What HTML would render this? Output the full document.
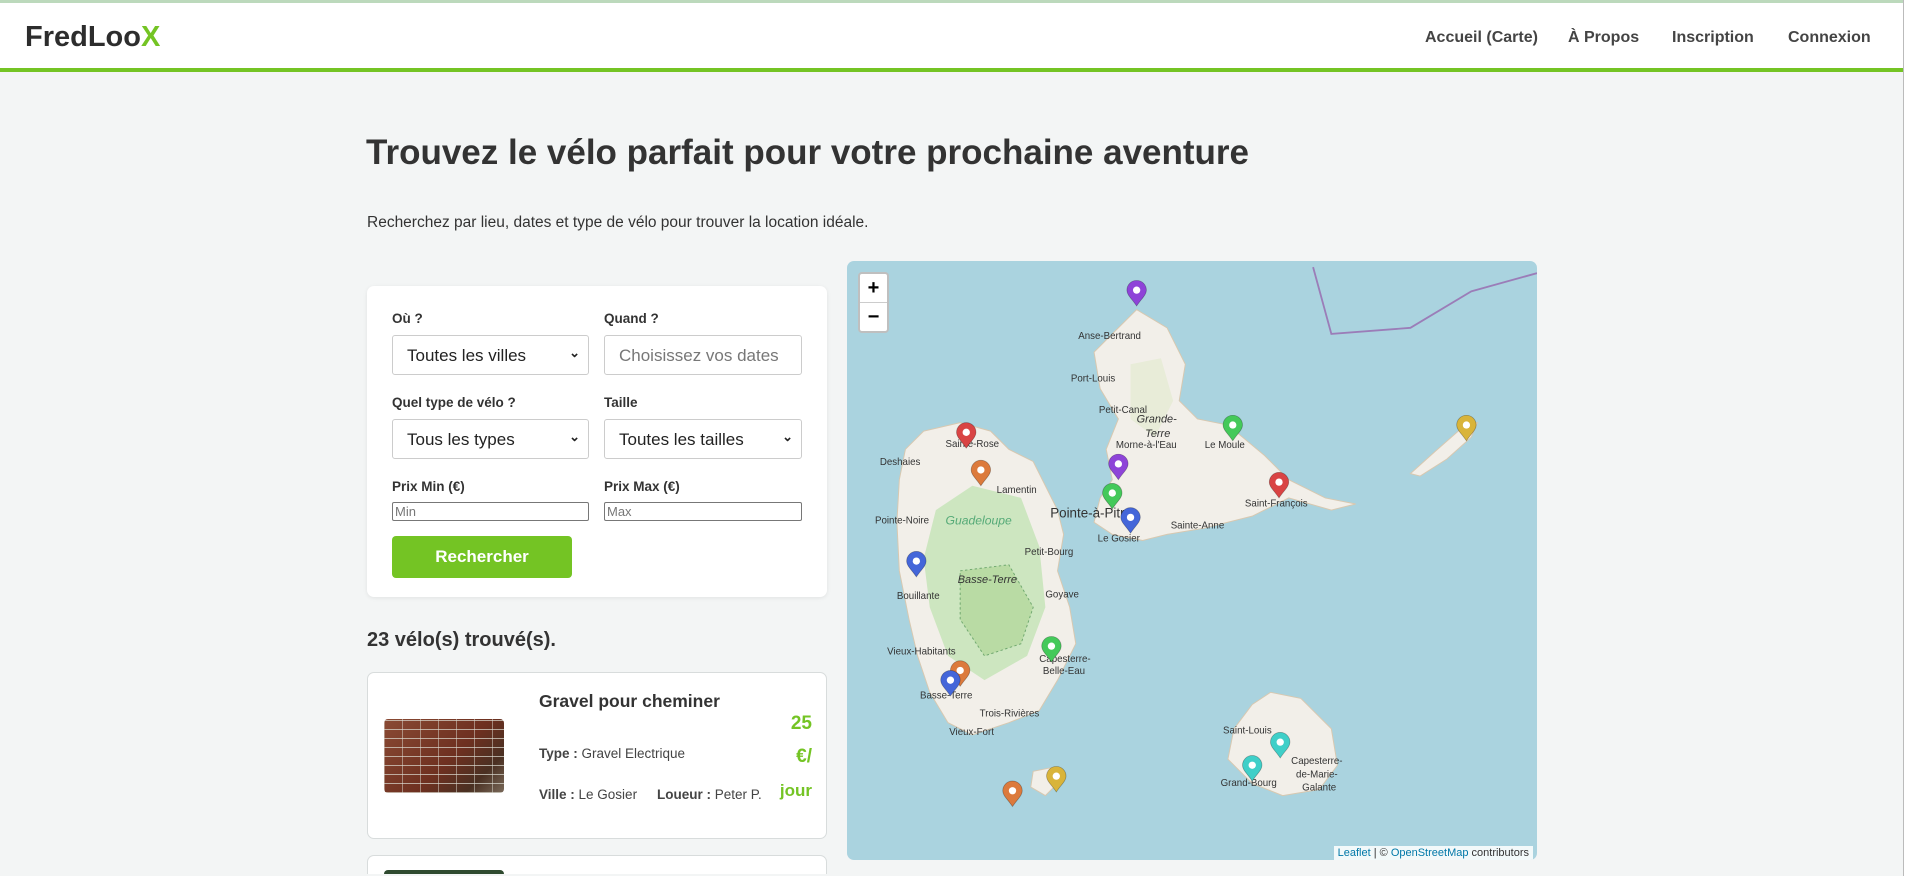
<!DOCTYPE html>
<html><head><meta charset="utf-8"><style>
*{box-sizing:border-box;margin:0;padding:0}
html{width:1907px;height:876px;overflow:hidden}
body{width:1907px;height:876px;overflow:hidden;background:#f3f5f5;font-family:"Liberation Sans",sans-serif;color:#333;position:relative;contain:paint}
.topline{position:absolute;left:0;top:0;width:1907px;height:3px;background:#bcd9bc}
header{position:absolute;left:0;top:3px;width:1903px;height:69px;background:#fff;border-bottom:4px solid #74c424}
.logo{position:absolute;left:25px;top:18px;font-size:29px;font-weight:bold;color:#2d2d2d}
.logo span{color:#74c424}
nav a{position:absolute;top:26px;font-size:16px;font-weight:bold;color:#444;text-decoration:none}
.sb{position:absolute;left:1903px;top:0;width:4px;height:876px;background:#fff;border-left:1px solid #bbb}
h1{position:absolute;left:366px;top:133px;font-size:35px;font-weight:bold;color:#333;white-space:nowrap}
.sub{position:absolute;left:367px;top:214px;font-size:15.5px;color:#333}
.form{position:absolute;left:367px;top:286px;width:460px;height:311px;background:#fff;border-radius:7px;box-shadow:0 1px 4px rgba(0,0,0,.08)}
.lbl{position:absolute;font-size:13.5px;font-weight:bold;color:#333}
.sel{position:absolute;height:40px;border:1px solid #ccc;border-radius:3px;background:#fff;font-size:17px;color:#222;padding:10px 14px}
.sel .ch{position:absolute;right:8px;top:9px;font-size:13px;font-weight:bold}
.inp{position:absolute;height:19px;border:1px solid #777;border-radius:2px;background:#fff;font-size:13px;color:#777;padding:1px 2px}
.btn{position:absolute;left:25px;top:250px;width:180px;height:42px;background:#74c424;border-radius:4px;color:#fff;font-weight:bold;font-size:17px;text-align:center;line-height:42px}
.count{position:absolute;left:367px;top:629px;font-size:20px;font-weight:bold;color:#333}
.card{position:absolute;left:367px;width:460px;background:#fff;border:1px solid #d8dcdc;border-radius:7px;overflow:hidden}
.img{position:absolute;left:16px;top:46px;width:120px;height:74px;border-radius:4px;background:
repeating-linear-gradient(0deg,rgba(220,220,210,.7) 0 1px,transparent 1px 9px),
repeating-linear-gradient(90deg,rgba(220,220,210,.5) 0 1px,transparent 1px 18px),
linear-gradient(135deg,#8a4a34,#6e3020 55%,#4a3022 80%,#7a6a5a)}
.title{position:absolute;left:171px;top:18px;font-size:17.5px;font-weight:bold;color:#333}
.meta{position:absolute;font-size:13.5px;color:#444}
.pr{position:absolute;right:14px;font-size:19px;font-weight:bold;color:#74c424}
.map{position:absolute;left:847px;top:261px;width:690px;height:599px;border-radius:7px;overflow:hidden;background:#aad3df}
.zc{position:absolute;left:11px;top:11px;width:31px;height:61px;background:#fff;border:2px solid rgba(0,0,0,.25);border-radius:4px}
.zc div{height:29px;text-align:center;font-size:20px;font-weight:bold;line-height:28px;color:#000}
.attr{position:absolute;right:4px;bottom:0;background:rgba(255,255,255,.85);font-size:11px;padding:1px 4px;color:#333}
.attr span{color:#0078a8}
</style></head><body>
<div class="topline"></div>
<header><div class="logo">FredLoo<span>X</span></div>
<nav><a style="left:1425px">Accueil (Carte)</a><a style="left:1568px">À Propos</a><a style="left:1672px">Inscription</a><a style="left:1788px">Connexion</a></nav></header>
<div class="sb"></div>
<h1>Trouvez le vélo parfait pour votre prochaine aventure</h1>
<div class="sub">Recherchez par lieu, dates et type de vélo pour trouver la location idéale.</div>
<div class="form">
<div class="lbl" style="left:25px;top:25px">Où ?</div>
<div class="lbl" style="left:237px;top:25px">Quand ?</div>
<div class="sel" style="left:25px;top:49px;width:197px">Toutes les villes<span class="ch">⌄</span></div>
<div class="sel" style="left:237px;top:49px;width:198px;color:#777">Choisissez vos dates</div>
<div class="lbl" style="left:25px;top:109px">Quel type de vélo ?</div>
<div class="lbl" style="left:237px;top:109px">Taille</div>
<div class="sel" style="left:25px;top:133px;width:197px">Tous les types<span class="ch">⌄</span></div>
<div class="sel" style="left:237px;top:133px;width:198px">Toutes les tailles<span class="ch">⌄</span></div>
<div class="lbl" style="left:25px;top:193px">Prix Min (€)</div>
<div class="lbl" style="left:237px;top:193px">Prix Max (€)</div>
<div class="inp" style="left:25px;top:216px;width:197px">Min</div>
<div class="inp" style="left:237px;top:216px;width:198px">Max</div>
<div class="btn">Rechercher</div>
</div>
<div class="count">23 vélo(s) trouvé(s).</div>
<div class="card" style="top:672px;height:167px">
<div class="img"></div>
<div class="title">Gravel pour cheminer</div>
<div class="meta" style="left:171px;top:73px"><b>Type :</b> Gravel Electrique</div>
<div class="meta" style="left:171px;top:114px"><b>Ville :</b> Le Gosier</div>
<div class="meta" style="left:289px;top:114px"><b>Loueur :</b> Peter P.</div>
<div class="pr" style="top:40px">25</div>
<div class="pr" style="top:73px">€/</div>
<div class="pr" style="top:108px;font-size:17px">jour</div>
</div>
<div class="card" style="top:855px;height:19px;border-bottom:none;border-radius:7px 7px 0 0"><div style="position:absolute;left:16px;top:14px;width:120px;height:5px;background:#2f4a2f;border-radius:4px 4px 0 0"></div></div>
<div class="map">
<svg width="690" height="599" viewBox="697 215 567 493" preserveAspectRatio="none" style="position:absolute;left:0;top:0">
<g fill="#f2efe9" stroke="#d8c8b0" stroke-width="0.8">
<path d="M935,255 L960,270 975,300 970,330 985,345 1010,350 1040,375 1060,395 1090,410 1115,415 1095,420 1060,410 1030,425 990,435 960,440 940,445 915,440 900,430 905,410 915,395 910,370 920,345 905,320 900,290 915,275Z"/>
<path d="M760,355 L790,348 815,355 830,370 850,380 860,400 870,420 875,440 870,470 880,500 885,530 870,560 855,585 830,595 800,605 780,595 765,570 755,540 748,510 740,470 738,430 740,395 745,370Z"/>
<path d="M1045,570 L1070,575 1095,600 1100,630 1085,650 1055,655 1030,645 1010,625 1015,600 1030,580Z"/>
<path d="M1160,390 L1180,372 1205,350 1215,348 1210,360 1190,378 1168,392Z"/>
<path d="M850,635 L865,632 870,645 860,655 848,648Z"/>
</g>
<path d="M770,420 L800,400 840,410 855,450 860,500 845,540 810,560 780,540 765,500 760,460Z" fill="#cde6c0"/>
<path d="M790,470 L830,465 850,500 840,530 810,540 790,510Z" fill="#b9dba4" stroke="#6fa86f" stroke-dasharray="2,2" stroke-width="0.8"/>
<path d="M930,300 L955,295 965,330 950,360 930,345Z" fill="#e8ecd8"/>
<path d="M1080,220 L1095,275 1160,270 1210,240 1264,225" fill="none" stroke="#9b7db8" stroke-width="1.5"/>
<g font-size="8" fill="#333" font-family="Liberation Sans,sans-serif">
<text x="887" y="279">Anse-Bertrand</text><text x="881" y="314">Port-Louis</text><text x="904" y="340">Petit-Canal</text>
<text x="935" y="348" font-style="italic" font-size="9">Grande-</text><text x="942" y="360" font-style="italic" font-size="9">Terre</text>
<text x="918" y="369">Morne-à-l'Eau</text><text x="991" y="369">Le Moule</text><text x="724" y="383">Deshaies</text>
<text x="778" y="368">Sainte-Rose</text><text x="820" y="406">Lamentin</text><text x="1024" y="417">Saint-François</text>
<text x="864" y="426" font-size="11">Pointe-à-Pitre</text><text x="720" y="431">Pointe-Noire</text><text x="778" y="432" font-style="italic" fill="#5a7" font-size="10">Guadeloupe</text>
<text x="963" y="435">Sainte-Anne</text><text x="903" y="446">Le Gosier</text><text x="843" y="457">Petit-Bourg</text>
<text x="788" y="480" font-style="italic" font-size="9">Basse-Terre</text><text x="738" y="493">Bouillante</text><text x="860" y="492">Goyave</text>
<text x="730" y="539">Vieux-Habitants</text><text x="855" y="545">Capesterre-</text><text x="858" y="555">Belle-Eau</text>
<text x="757" y="575">Basse-Terre</text><text x="806" y="590">Trois-Rivières</text><text x="781" y="605">Vieux-Fort</text>
<text x="1006" y="604">Saint-Louis</text><text x="1062" y="629">Capesterre-</text><text x="1066" y="640">de-Marie-</text><text x="1071" y="651">Galante</text><text x="1004" y="647">Grand-Bourg</text>
</g>
<g stroke-width="0.6" stroke="rgba(0,0,0,.3)">
<path fill="#8e44d8" d="M935,252 c-4,-6 -8,-9 -8,-13 a8,8 0 1 1 16,0 c0,4 -4,7 -8,13z"/>
<path fill="#d94444" d="M795,369 c-4,-6 -8,-9 -8,-13 a8,8 0 1 1 16,0 c0,4 -4,7 -8,13z"/>
<path fill="#dc7a3c" d="M807,400 c-4,-6 -8,-9 -8,-13 a8,8 0 1 1 16,0 c0,4 -4,7 -8,13z"/>
<path fill="#8e44d8" d="M920,395 c-4,-6 -8,-9 -8,-13 a8,8 0 1 1 16,0 c0,4 -4,7 -8,13z"/>
<path fill="#44c95a" d="M915,419 c-4,-6 -8,-9 -8,-13 a8,8 0 1 1 16,0 c0,4 -4,7 -8,13z"/>
<path fill="#4466d9" d="M930,439 c-4,-6 -8,-9 -8,-13 a8,8 0 1 1 16,0 c0,4 -4,7 -8,13z"/>
<path fill="#44c95a" d="M1014,363 c-4,-6 -8,-9 -8,-13 a8,8 0 1 1 16,0 c0,4 -4,7 -8,13z"/>
<path fill="#d9b43a" d="M1206,363 c-4,-6 -8,-9 -8,-13 a8,8 0 1 1 16,0 c0,4 -4,7 -8,13z"/>
<path fill="#d94444" d="M1052,410 c-4,-6 -8,-9 -8,-13 a8,8 0 1 1 16,0 c0,4 -4,7 -8,13z"/>
<path fill="#4466d9" d="M754,475 c-4,-6 -8,-9 -8,-13 a8,8 0 1 1 16,0 c0,4 -4,7 -8,13z"/>
<path fill="#44c95a" d="M865,545 c-4,-6 -8,-9 -8,-13 a8,8 0 1 1 16,0 c0,4 -4,7 -8,13z"/>
<path fill="#dc7a3c" d="M790,565 c-4,-6 -8,-9 -8,-13 a8,8 0 1 1 16,0 c0,4 -4,7 -8,13z"/>
<path fill="#4466d9" d="M782,573 c-4,-6 -8,-9 -8,-13 a8,8 0 1 1 16,0 c0,4 -4,7 -8,13z"/>
<path fill="#3fcfc8" d="M1053,624 c-4,-6 -8,-9 -8,-13 a8,8 0 1 1 16,0 c0,4 -4,7 -8,13z"/>
<path fill="#3fcfc8" d="M1030,643 c-4,-6 -8,-9 -8,-13 a8,8 0 1 1 16,0 c0,4 -4,7 -8,13z"/>
<path fill="#dc7a3c" d="M833,664 c-4,-6 -8,-9 -8,-13 a8,8 0 1 1 16,0 c0,4 -4,7 -8,13z"/>
<path fill="#d9b43a" d="M869,652 c-4,-6 -8,-9 -8,-13 a8,8 0 1 1 16,0 c0,4 -4,7 -8,13z"/>
</g>
<g fill="#fff">
<circle cx="935" cy="239" r="3"/><circle cx="795" cy="356" r="3"/><circle cx="807" cy="387" r="3"/><circle cx="920" cy="382" r="3"/><circle cx="915" cy="406" r="3"/><circle cx="930" cy="426" r="3"/><circle cx="1014" cy="350" r="3"/><circle cx="1206" cy="350" r="3"/><circle cx="1052" cy="397" r="3"/><circle cx="754" cy="462" r="3"/><circle cx="865" cy="532" r="3"/><circle cx="790" cy="552" r="3"/><circle cx="782" cy="560" r="3"/><circle cx="1053" cy="611" r="3"/><circle cx="1030" cy="630" r="3"/><circle cx="833" cy="651" r="3"/><circle cx="869" cy="639" r="3"/>
</g>
</svg>
<div class="zc"><div style="border-bottom:1px solid #ccc">+</div><div>−</div></div>
<div class="attr"><span>Leaflet</span> | © <span>OpenStreetMap</span> contributors</div>
</div>
</body></html>
